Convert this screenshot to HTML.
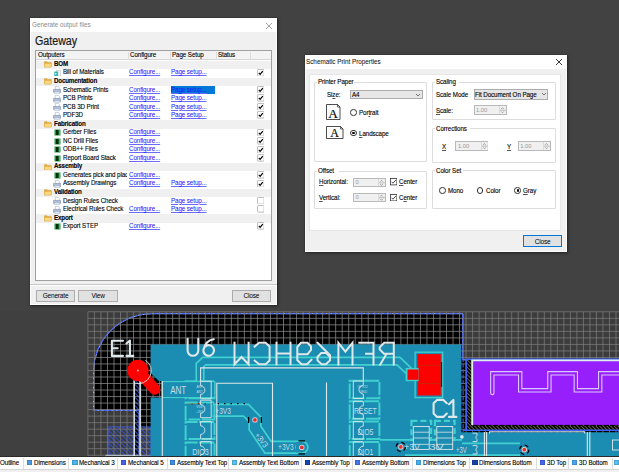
<!DOCTYPE html>
<html><head><meta charset="utf-8">
<style>
*{margin:0;padding:0;box-sizing:border-box}
html,body{width:619px;height:472px;overflow:hidden;background:#424242;font-family:"Liberation Sans",sans-serif;color:#000}
.a{position:absolute}
.t{position:absolute;white-space:nowrap;font-size:7px;line-height:8.5px;letter-spacing:-0.1px;transform:scaleX(0.89);transform-origin:0 0;-webkit-text-stroke:0.12px currentColor}
#d1{left:30px;top:18px;width:247px;height:287px;background:#f0f0f0;box-shadow:inset 0 0 0 0.9px #fcfcfc,0 0 1px rgba(0,0,0,.6),1px 1px 3px rgba(0,0,0,.45)}
#d2{left:304.5px;top:55.3px;width:262.5px;height:196.5px;background:#f0f0f0;box-shadow:inset 0 0 0 0.9px #fcfcfc,0 0 1px rgba(0,0,0,.6),1px 1px 3px rgba(0,0,0,.45)}
.lnk{-webkit-text-stroke:0.05px #1a1aff;color:#1a1aff;text-decoration:underline;text-decoration-thickness:0.4px;text-underline-offset:0.8px;text-decoration-color:#6a6aff}
.row{position:absolute;left:0;width:235.4px;height:8.5px}
.g{background:#f0f0f0}
.b{font-weight:bold}
.cb{position:absolute;left:220.5px;width:7px;height:7px;border:0.8px solid #9a9a9a;background:#fff;border-radius:1px}
.cb.on::after{content:"";position:absolute;left:1.6px;top:0.3px;width:2px;height:3.8px;border:solid #000;border-width:0 1.2px 1.2px 0;transform:rotate(40deg)}
.btn{position:absolute;background:#e1e1e1;border:0.8px solid #adadad;font-size:6.5px;letter-spacing:-0.18px;text-align:center}
.grp{position:absolute;border:0.8px solid #dcdcdc;border-radius:1px}

.spin{position:absolute;background:#f0f0f0;border:0.8px solid #b9b9b9;font-size:5.8px;color:#9a9a9a;line-height:8px;padding-left:1.5px}
.rad{position:absolute;width:6.6px;height:6.6px;border:0.8px solid #333;border-radius:50%;background:#fff}
.rad.on::after{content:"";position:absolute;left:1.2px;top:1.2px;width:2.6px;height:2.6px;border-radius:50%;background:#000}
.ck2{position:absolute;width:6.5px;height:6.5px;border:0.8px solid #333;background:#fff}
.ck2::after{content:"";position:absolute;left:1.7px;top:0.2px;width:1.8px;height:3.6px;border:solid #000;border-width:0 0.9px 0.9px 0;transform:rotate(40deg)}
u{text-decoration-thickness:0.4px;text-underline-offset:0.6px;text-decoration-color:#555}
</style></head><body>

<!-- ============ DIALOG 1 ============ -->
<div id="d1" class="a">
  <div class="a" style="left:0;top:0;width:247px;height:14px;background:#fff"></div>
  <div class="t" style="left:1.8px;top:2.6px;color:#8a8a8a;font-size:7.1px;letter-spacing:0;-webkit-text-stroke:0">Generate output files</div>
  <svg class="a" style="left:235px;top:3.5px" width="8" height="8" viewBox="0 0 8 8"><path d="M1 1L7 7M7 1L1 7" stroke="#8a8a8a" stroke-width="0.8"/></svg>
  <div class="t" style="left:5.2px;top:15.6px;font-size:12px;line-height:14px;color:#1a1a1a;letter-spacing:0;-webkit-text-stroke:0.2px #1a1a1a">Gateway</div>

  <!-- table -->
  <div class="a" style="left:5px;top:32px;width:237px;height:231px;background:#fff;border:0.8px solid #a0a0a0">
    <div class="a" style="left:0;top:0;width:235.4px;height:9px;background:#f3f3f3;border-bottom:0.8px solid #d5d5d5">
      <div class="a" style="left:91.5px;top:0.5px;width:0.8px;height:8px;background:#dcdcdc"></div>
      <div class="a" style="left:133.5px;top:0.5px;width:0.8px;height:8px;background:#dcdcdc"></div>
      <div class="a" style="left:180px;top:0.5px;width:0.8px;height:8px;background:#dcdcdc"></div>
      <div class="a" style="left:214px;top:0.5px;width:0.8px;height:8px;background:#dcdcdc"></div>
      <div class="t" style="left:2px;top:0.3px">Outputers</div>
      <div class="t" style="left:93.5px;top:0.3px">Configure</div>
      <div class="t" style="left:135.5px;top:0.3px">Page Setup</div>
      <div class="t" style="left:182px;top:0.3px">Status</div>
    </div>
    <div id="rows" class="a" style="left:0;top:9.5px;width:236px;height:220px"><div class="row g" style="top:0.00px"><svg class="a" style="left:8.4px;top:0.7px" width="8" height="6.6" viewBox="0 0 16 13"><path d="M0.8 1.2H6L7.5 2.7H14.5V11.8H0.8Z" fill="#e3aa3c" stroke="#c8901e" stroke-width="0.8"/><path d="M1.2 5H15.5L14 12H0.8Z" fill="#fcd982" stroke="#d8a030" stroke-width="0.7"/></svg><div class="t b" style="left:17.9px;top:-0.6px;font-size:7px;letter-spacing:-0.2px">BOM</div></div><div class="row" style="top:8.54px"><svg class="a" style="left:18.1px;top:0.9px" width="6.8" height="6.5" viewBox="0 0 14 13"><rect x="5" y="0.5" width="8.5" height="12" fill="#f2f4f6" stroke="#a8b4c0" stroke-width="0.9"/><rect x="0.5" y="3" width="8" height="9.5" fill="#35b6b0"/><rect x="2" y="6" width="3" height="3" fill="#d8fbf8"/></svg><div class="t" style="left:27.3px;top:-0.6px;width:72px;overflow:hidden">Bill of Materials</div><div class="t lnk" style="left:92.9px;top:-0.6px">Configure...</div><div class="t lnk" style="left:134.8px;top:-0.6px">Page setup...</div><svg class="a" style="left:220.8px;top:-0.3px" width="7.6" height="7.6" viewBox="0 0 8 8"><rect x="0.5" y="0.5" width="7" height="7" rx="0.8" fill="#fff" stroke="#a8a8a8" stroke-width="0.8"/><path d="M1.9 4.1L3.3 5.6L6.1 2.2" fill="none" stroke="#000" stroke-width="1.25"/></svg></div><div class="row g" style="top:17.08px"><svg class="a" style="left:8.4px;top:0.7px" width="8" height="6.6" viewBox="0 0 16 13"><path d="M0.8 1.2H6L7.5 2.7H14.5V11.8H0.8Z" fill="#e3aa3c" stroke="#c8901e" stroke-width="0.8"/><path d="M1.2 5H15.5L14 12H0.8Z" fill="#fcd982" stroke="#d8a030" stroke-width="0.7"/></svg><div class="t b" style="left:17.9px;top:-0.6px;font-size:7px;letter-spacing:-0.2px">Documentation</div></div><div class="row" style="top:25.62px"><svg class="a" style="left:17.3px;top:0.2px" width="8.2" height="7.8" viewBox="0 0 16 15"><path d="M4.5 0.6H10.5L12.3 2.4V7.5H4.5Z" fill="#fff" stroke="#8696ac" stroke-width="0.9"/><path d="M0.8 6.5H15.2V12.2H0.8Z" fill="#b3c0d6" stroke="#6a7fa4" stroke-width="0.9"/><path d="M2.6 10.5H13.4V14.2H2.6Z" fill="#e6ecf4" stroke="#8394b4" stroke-width="0.8"/></svg><div class="t" style="left:27.3px;top:-0.6px;width:72px;overflow:hidden">Schematic Prints</div><div class="t lnk" style="left:92.9px;top:-0.6px">Configure...</div><div class="a" style="left:134.6px;top:-0.4px;width:44.8px;height:8.2px;background:#0078d7"></div><div class="t lnk" style="left:134.8px;top:-0.6px">Page setup...</div><svg class="a" style="left:220.8px;top:-0.3px" width="7.6" height="7.6" viewBox="0 0 8 8"><rect x="0.5" y="0.5" width="7" height="7" rx="0.8" fill="#fff" stroke="#a8a8a8" stroke-width="0.8"/><path d="M1.9 4.1L3.3 5.6L6.1 2.2" fill="none" stroke="#000" stroke-width="1.25"/></svg></div><div class="row" style="top:34.16px"><svg class="a" style="left:17.3px;top:0.2px" width="8.2" height="7.8" viewBox="0 0 16 15"><path d="M4.5 0.6H10.5L12.3 2.4V7.5H4.5Z" fill="#fff" stroke="#8696ac" stroke-width="0.9"/><path d="M0.8 6.5H15.2V12.2H0.8Z" fill="#b3c0d6" stroke="#6a7fa4" stroke-width="0.9"/><path d="M2.6 10.5H13.4V14.2H2.6Z" fill="#e6ecf4" stroke="#8394b4" stroke-width="0.8"/></svg><div class="t" style="left:27.3px;top:-0.6px;width:72px;overflow:hidden">PCB Prints</div><div class="t lnk" style="left:92.9px;top:-0.6px">Configure...</div><div class="t lnk" style="left:134.8px;top:-0.6px">Page setup...</div><svg class="a" style="left:220.8px;top:-0.3px" width="7.6" height="7.6" viewBox="0 0 8 8"><rect x="0.5" y="0.5" width="7" height="7" rx="0.8" fill="#fff" stroke="#a8a8a8" stroke-width="0.8"/><path d="M1.9 4.1L3.3 5.6L6.1 2.2" fill="none" stroke="#000" stroke-width="1.25"/></svg></div><div class="row" style="top:42.70px"><svg class="a" style="left:17.3px;top:0.2px" width="8.2" height="7.8" viewBox="0 0 16 15"><path d="M4.5 0.6H10.5L12.3 2.4V7.5H4.5Z" fill="#fff" stroke="#8696ac" stroke-width="0.9"/><path d="M0.8 6.5H15.2V12.2H0.8Z" fill="#b3c0d6" stroke="#6a7fa4" stroke-width="0.9"/><path d="M2.6 10.5H13.4V14.2H2.6Z" fill="#e6ecf4" stroke="#8394b4" stroke-width="0.8"/></svg><div class="t" style="left:27.3px;top:-0.6px;width:72px;overflow:hidden">PCB 3D Print</div><div class="t lnk" style="left:92.9px;top:-0.6px">Configure...</div><div class="t lnk" style="left:134.8px;top:-0.6px">Page setup...</div><svg class="a" style="left:220.8px;top:-0.3px" width="7.6" height="7.6" viewBox="0 0 8 8"><rect x="0.5" y="0.5" width="7" height="7" rx="0.8" fill="#fff" stroke="#a8a8a8" stroke-width="0.8"/><path d="M1.9 4.1L3.3 5.6L6.1 2.2" fill="none" stroke="#000" stroke-width="1.25"/></svg></div><div class="row" style="top:51.24px"><svg class="a" style="left:17.3px;top:0.2px" width="8.2" height="7.8" viewBox="0 0 16 15"><path d="M4.5 0.6H10.5L12.3 2.4V7.5H4.5Z" fill="#fff" stroke="#8696ac" stroke-width="0.9"/><path d="M0.8 6.5H15.2V12.2H0.8Z" fill="#b3c0d6" stroke="#6a7fa4" stroke-width="0.9"/><path d="M2.6 10.5H13.4V14.2H2.6Z" fill="#e6ecf4" stroke="#8394b4" stroke-width="0.8"/></svg><div class="t" style="left:27.3px;top:-0.6px;width:72px;overflow:hidden">PDF3D</div><div class="t lnk" style="left:92.9px;top:-0.6px">Configure...</div><div class="t lnk" style="left:134.8px;top:-0.6px">Page setup...</div><svg class="a" style="left:220.8px;top:-0.3px" width="7.6" height="7.6" viewBox="0 0 8 8"><rect x="0.5" y="0.5" width="7" height="7" rx="0.8" fill="#fff" stroke="#a8a8a8" stroke-width="0.8"/><path d="M1.9 4.1L3.3 5.6L6.1 2.2" fill="none" stroke="#000" stroke-width="1.25"/></svg></div><div class="row g" style="top:59.78px"><svg class="a" style="left:8.4px;top:0.7px" width="8" height="6.6" viewBox="0 0 16 13"><path d="M0.8 1.2H6L7.5 2.7H14.5V11.8H0.8Z" fill="#e3aa3c" stroke="#c8901e" stroke-width="0.8"/><path d="M1.2 5H15.5L14 12H0.8Z" fill="#fcd982" stroke="#d8a030" stroke-width="0.7"/></svg><div class="t b" style="left:17.9px;top:-0.6px;font-size:7px;letter-spacing:-0.2px">Fabrication</div></div><div class="row" style="top:68.32px"><svg class="a" style="left:18.2px;top:0.6px" width="7" height="7" viewBox="0 0 14 14"><rect x="1" y="1" width="12" height="12" fill="#1a9a3a"/><rect x="4" y="2" width="5" height="10" fill="#0b2a12"/><rect x="10" y="2" width="2" height="10" fill="#3cc060"/></svg><div class="t" style="left:27.3px;top:-0.6px;width:72px;overflow:hidden">Gerber Files</div><div class="t lnk" style="left:92.9px;top:-0.6px">Configure...</div><svg class="a" style="left:220.8px;top:-0.3px" width="7.6" height="7.6" viewBox="0 0 8 8"><rect x="0.5" y="0.5" width="7" height="7" rx="0.8" fill="#fff" stroke="#a8a8a8" stroke-width="0.8"/><path d="M1.9 4.1L3.3 5.6L6.1 2.2" fill="none" stroke="#000" stroke-width="1.25"/></svg></div><div class="row" style="top:76.86px"><svg class="a" style="left:18.2px;top:0.6px" width="7" height="7" viewBox="0 0 14 14"><rect x="1" y="1" width="12" height="12" fill="#1a9a3a"/><rect x="4" y="2" width="5" height="10" fill="#0b2a12"/><rect x="10" y="2" width="2" height="10" fill="#3cc060"/></svg><div class="t" style="left:27.3px;top:-0.6px;width:72px;overflow:hidden">NC Drill Files</div><div class="t lnk" style="left:92.9px;top:-0.6px">Configure...</div><svg class="a" style="left:220.8px;top:-0.3px" width="7.6" height="7.6" viewBox="0 0 8 8"><rect x="0.5" y="0.5" width="7" height="7" rx="0.8" fill="#fff" stroke="#a8a8a8" stroke-width="0.8"/><path d="M1.9 4.1L3.3 5.6L6.1 2.2" fill="none" stroke="#000" stroke-width="1.25"/></svg></div><div class="row" style="top:85.40px"><svg class="a" style="left:18.2px;top:0.6px" width="7" height="7" viewBox="0 0 14 14"><rect x="1" y="1" width="12" height="12" fill="#1a9a3a"/><rect x="4" y="2" width="5" height="10" fill="#0b2a12"/><rect x="10" y="2" width="2" height="10" fill="#3cc060"/></svg><div class="t" style="left:27.3px;top:-0.6px;width:72px;overflow:hidden">ODB++ Files</div><div class="t lnk" style="left:92.9px;top:-0.6px">Configure...</div><svg class="a" style="left:220.8px;top:-0.3px" width="7.6" height="7.6" viewBox="0 0 8 8"><rect x="0.5" y="0.5" width="7" height="7" rx="0.8" fill="#fff" stroke="#a8a8a8" stroke-width="0.8"/><path d="M1.9 4.1L3.3 5.6L6.1 2.2" fill="none" stroke="#000" stroke-width="1.25"/></svg></div><div class="row" style="top:93.94px"><svg class="a" style="left:18.2px;top:0.6px" width="7" height="7" viewBox="0 0 14 14"><rect x="1" y="1" width="12" height="12" fill="#1a9a3a"/><rect x="4" y="2" width="5" height="10" fill="#0b2a12"/><rect x="10" y="2" width="2" height="10" fill="#3cc060"/></svg><div class="t" style="left:27.3px;top:-0.6px;width:72px;overflow:hidden">Report Board Stack</div><div class="t lnk" style="left:92.9px;top:-0.6px">Configure...</div><svg class="a" style="left:220.8px;top:-0.3px" width="7.6" height="7.6" viewBox="0 0 8 8"><rect x="0.5" y="0.5" width="7" height="7" rx="0.8" fill="#fff" stroke="#a8a8a8" stroke-width="0.8"/><path d="M1.9 4.1L3.3 5.6L6.1 2.2" fill="none" stroke="#000" stroke-width="1.25"/></svg></div><div class="row g" style="top:102.48px"><svg class="a" style="left:8.4px;top:0.7px" width="8" height="6.6" viewBox="0 0 16 13"><path d="M0.8 1.2H6L7.5 2.7H14.5V11.8H0.8Z" fill="#e3aa3c" stroke="#c8901e" stroke-width="0.8"/><path d="M1.2 5H15.5L14 12H0.8Z" fill="#fcd982" stroke="#d8a030" stroke-width="0.7"/></svg><div class="t b" style="left:17.9px;top:-0.6px;font-size:7px;letter-spacing:-0.2px">Assembly</div></div><div class="row" style="top:111.02px"><svg class="a" style="left:18.2px;top:0.6px" width="7" height="7" viewBox="0 0 14 14"><rect x="1" y="1" width="12" height="12" fill="#1a9a3a"/><rect x="4" y="2" width="5" height="10" fill="#0b2a12"/><rect x="10" y="2" width="2" height="10" fill="#3cc060"/></svg><div class="t" style="left:27.3px;top:-0.6px;width:72px;overflow:hidden">Generates pick and place files</div><div class="t lnk" style="left:92.9px;top:-0.6px">Configure...</div><svg class="a" style="left:220.8px;top:-0.3px" width="7.6" height="7.6" viewBox="0 0 8 8"><rect x="0.5" y="0.5" width="7" height="7" rx="0.8" fill="#fff" stroke="#a8a8a8" stroke-width="0.8"/><path d="M1.9 4.1L3.3 5.6L6.1 2.2" fill="none" stroke="#000" stroke-width="1.25"/></svg></div><div class="row" style="top:119.56px"><svg class="a" style="left:17.3px;top:0.2px" width="8.2" height="7.8" viewBox="0 0 16 15"><path d="M4.5 0.6H10.5L12.3 2.4V7.5H4.5Z" fill="#fff" stroke="#8696ac" stroke-width="0.9"/><path d="M0.8 6.5H15.2V12.2H0.8Z" fill="#b3c0d6" stroke="#6a7fa4" stroke-width="0.9"/><path d="M2.6 10.5H13.4V14.2H2.6Z" fill="#e6ecf4" stroke="#8394b4" stroke-width="0.8"/></svg><div class="t" style="left:27.3px;top:-0.6px;width:72px;overflow:hidden">Assembly Drawings</div><div class="t lnk" style="left:92.9px;top:-0.6px">Configure...</div><div class="t lnk" style="left:134.8px;top:-0.6px">Page setup...</div><svg class="a" style="left:220.8px;top:-0.3px" width="7.6" height="7.6" viewBox="0 0 8 8"><rect x="0.5" y="0.5" width="7" height="7" rx="0.8" fill="#fff" stroke="#a8a8a8" stroke-width="0.8"/><path d="M1.9 4.1L3.3 5.6L6.1 2.2" fill="none" stroke="#000" stroke-width="1.25"/></svg></div><div class="row g" style="top:128.10px"><svg class="a" style="left:8.4px;top:0.7px" width="8" height="6.6" viewBox="0 0 16 13"><path d="M0.8 1.2H6L7.5 2.7H14.5V11.8H0.8Z" fill="#e3aa3c" stroke="#c8901e" stroke-width="0.8"/><path d="M1.2 5H15.5L14 12H0.8Z" fill="#fcd982" stroke="#d8a030" stroke-width="0.7"/></svg><div class="t b" style="left:17.9px;top:-0.6px;font-size:7px;letter-spacing:-0.2px">Validation</div></div><div class="row" style="top:136.64px"><svg class="a" style="left:17.3px;top:0.2px" width="8.2" height="7.8" viewBox="0 0 16 15"><path d="M4.5 0.6H10.5L12.3 2.4V7.5H4.5Z" fill="#fff" stroke="#8696ac" stroke-width="0.9"/><path d="M0.8 6.5H15.2V12.2H0.8Z" fill="#b3c0d6" stroke="#6a7fa4" stroke-width="0.9"/><path d="M2.6 10.5H13.4V14.2H2.6Z" fill="#e6ecf4" stroke="#8394b4" stroke-width="0.8"/></svg><div class="t" style="left:27.3px;top:-0.6px;width:72px;overflow:hidden">Design Rules Check</div><div class="t lnk" style="left:134.8px;top:-0.6px">Page setup...</div><svg class="a" style="left:220.8px;top:-0.3px" width="7.6" height="7.6" viewBox="0 0 8 8"><rect x="0.5" y="0.5" width="7" height="7" rx="0.8" fill="#fff" stroke="#a8a8a8" stroke-width="0.8"/></svg></div><div class="row" style="top:145.18px"><svg class="a" style="left:17.3px;top:0.2px" width="8.2" height="7.8" viewBox="0 0 16 15"><path d="M4.5 0.6H10.5L12.3 2.4V7.5H4.5Z" fill="#fff" stroke="#8696ac" stroke-width="0.9"/><path d="M0.8 6.5H15.2V12.2H0.8Z" fill="#b3c0d6" stroke="#6a7fa4" stroke-width="0.9"/><path d="M2.6 10.5H13.4V14.2H2.6Z" fill="#e6ecf4" stroke="#8394b4" stroke-width="0.8"/></svg><div class="t" style="left:27.3px;top:-0.6px;width:72px;overflow:hidden">Electrical Rules Check</div><div class="t lnk" style="left:92.9px;top:-0.6px">Configure...</div><div class="t lnk" style="left:134.8px;top:-0.6px">Page setup...</div><svg class="a" style="left:220.8px;top:-0.3px" width="7.6" height="7.6" viewBox="0 0 8 8"><rect x="0.5" y="0.5" width="7" height="7" rx="0.8" fill="#fff" stroke="#a8a8a8" stroke-width="0.8"/></svg></div><div class="row g" style="top:153.72px"><svg class="a" style="left:8.4px;top:0.7px" width="8" height="6.6" viewBox="0 0 16 13"><path d="M0.8 1.2H6L7.5 2.7H14.5V11.8H0.8Z" fill="#e3aa3c" stroke="#c8901e" stroke-width="0.8"/><path d="M1.2 5H15.5L14 12H0.8Z" fill="#fcd982" stroke="#d8a030" stroke-width="0.7"/></svg><div class="t b" style="left:17.9px;top:-0.6px;font-size:7px;letter-spacing:-0.2px">Export</div></div><div class="row" style="top:162.26px"><svg class="a" style="left:18.2px;top:0.6px" width="7" height="7" viewBox="0 0 14 14"><rect x="1" y="1" width="12" height="12" fill="#1a9a3a"/><rect x="4" y="2" width="5" height="10" fill="#0b2a12"/><rect x="10" y="2" width="2" height="10" fill="#3cc060"/></svg><div class="t" style="left:27.3px;top:-0.6px;width:72px;overflow:hidden">Export STEP</div><div class="t lnk" style="left:92.9px;top:-0.6px">Configure...</div><svg class="a" style="left:220.8px;top:-0.3px" width="7.6" height="7.6" viewBox="0 0 8 8"><rect x="0.5" y="0.5" width="7" height="7" rx="0.8" fill="#fff" stroke="#a8a8a8" stroke-width="0.8"/><path d="M1.9 4.1L3.3 5.6L6.1 2.2" fill="none" stroke="#000" stroke-width="1.25"/></svg></div></div>
  </div>

  <div class="a" style="left:0;top:266px;width:247px;height:0.8px;background:#c8c8c8"></div>
  <div class="a" style="left:0;top:266.8px;width:247px;height:0.8px;background:#fff"></div>
  <div class="btn" style="left:6px;top:271.5px;width:39px;height:12px;line-height:10.5px">Generate</div>
  <div class="btn" style="left:48.3px;top:271.5px;width:39.5px;height:12px;line-height:10.5px">View</div>
  <div class="btn" style="left:202.2px;top:271.5px;width:38.5px;height:12px;line-height:10.5px">Close</div>
</div>

<!-- ============ DIALOG 2 ============ -->
<div id="d2" class="a">
  <div class="a" style="left:0;top:0;width:262.5px;height:13.5px;background:#fff"></div>
  <div class="t" style="left:1.8px;top:2.6px;font-size:7.1px;letter-spacing:0;color:#111;-webkit-text-stroke:0.05px #111">Schematic Print Properties</div>
  <svg class="a" style="left:250.5px;top:3px" width="8" height="8" viewBox="0 0 8 8"><path d="M1 1L7 7M7 1L1 7" stroke="#222" stroke-width="0.9"/></svg>
  <div class="a" style="left:4.8px;top:18.3px;width:252.2px;height:157.6px;background:#fff;border:0.8px solid #e6e6e6"></div>
  <div class="btn" style="left:218.6px;top:180px;width:39px;height:11.7px;line-height:11px;border:1px solid #0078d7">Close</div>
</div>

<div class="a" style="left:0;top:0;width:619px;height:472px;pointer-events:none"><div class="grp" style="left:314px;top:81.5px;width:113.00px;height:80.60px"></div><div class="a" style="left:317.20px;top:79.50px;width:37px;height:4px;background:#fff"></div><div class="t" style="left:318.2px;top:78.20px;font-size:7px;line-height:8px;">Printer Paper</div><div class="grp" style="left:314px;top:170.5px;width:113.00px;height:38.90px"></div><div class="a" style="left:317.20px;top:168.50px;width:22px;height:4px;background:#fff"></div><div class="t" style="left:318.2px;top:167.20px;font-size:7px;line-height:8px;">Offset</div><div class="grp" style="left:431.6px;top:81.5px;width:124.60px;height:38.80px"></div><div class="a" style="left:434.80px;top:79.50px;width:24px;height:4px;background:#fff"></div><div class="t" style="left:435.8px;top:78.20px;font-size:7px;line-height:8px;">Scaling</div><div class="grp" style="left:431.6px;top:128.3px;width:124.60px;height:34.60px"></div><div class="a" style="left:434.80px;top:126.30px;width:35px;height:4px;background:#fff"></div><div class="t" style="left:435.8px;top:125.00px;font-size:7px;line-height:8px;">Corrections</div><div class="grp" style="left:431.6px;top:170.2px;width:124.60px;height:39.20px"></div><div class="a" style="left:434.80px;top:168.20px;width:28px;height:4px;background:#fff"></div><div class="t" style="left:435.8px;top:166.90px;font-size:7px;line-height:8px;">Color Set</div><div class="t" style="left:326.8px;top:90.80px;font-size:7px;line-height:8px;">Si<u>z</u>e:</div><div class="a" style="left:350.1px;top:90.1px;width:72.70px;height:8.90px;background:#e6e6e6;border:0.8px solid #acacac"></div><div class="t" style="left:351.90000000000003px;top:91.05px;font-size:7px;line-height:8px;">A4</div><svg class="a" style="left:415.30px;top:92.55px" width="6" height="4" viewBox="0 0 6 4"><path d="M1 1L3 3L5 1" stroke="#444" stroke-width="0.7" fill="none"/></svg><svg class="a" style="left:326.1px;top:104.1px" width="14.5" height="16" viewBox="0 0 58.0 64"><path d="M2 2H46.0L56.0 12V62H2Z" fill="#fff" stroke="#111" stroke-width="3"/><path d="M46.0 2V12H56.0" fill="none" stroke="#111" stroke-width="2.5"/><text x="28.0" y="55" text-anchor="middle" font-family="Liberation Serif" font-size="53.7" fill="#000" stroke="#000" stroke-width="0.6">A</text></svg><div class="rad" style="left:350.10px;top:109.20px"></div><div class="t" style="left:358.7px;top:109.00px;font-size:7px;line-height:8px;">Por<u>t</u>rait</div><svg class="a" style="left:326.1px;top:125.8px" width="17.5" height="13" viewBox="0 0 70.0 52"><path d="M2 2H58.0L68.0 12V50H2Z" fill="#fff" stroke="#111" stroke-width="3"/><path d="M58.0 2V12H68.0" fill="none" stroke="#111" stroke-width="2.5"/><text x="34.0" y="43" text-anchor="middle" font-family="Liberation Serif" font-size="48.1" fill="#000" stroke="#000" stroke-width="0.6">A</text></svg><div class="rad on" style="left:350.10px;top:129.70px"></div><div class="t" style="left:358.7px;top:129.50px;font-size:7px;line-height:8px;"><u>L</u>andscape</div><div class="t" style="left:319.1px;top:178.40px;font-size:7px;line-height:8px;"><u>H</u>orizontal:</div><div class="spin" style="left:353.1px;top:178px;width:32.70px;height:9.30px;line-height:7.70px">0</div><svg class="a" style="left:378.20px;top:178.80px" width="6.8" height="7.70" viewBox="0 0 6.8 7.70"><rect x="0" y="0" width="6.8" height="7.70" fill="#f0f0f0"/><path d="M0.3 0V7.70" stroke="#c4c4c4" stroke-width="0.6"/><path d="M1 3.85H6.8" stroke="#9a9a9a" stroke-width="0.6"/><path d="M2.2 2.65L3.5 1.25L4.8 2.65M2.2 5.05L3.5 6.45L4.8 5.05" stroke="#777" stroke-width="0.6" fill="none"/></svg><svg class="a" style="left:389.90px;top:178.30px" width="7.4" height="7.4" viewBox="0 0 7.4 7.4"><rect x="0.5" y="0.5" width="6.4" height="6.4" fill="#fff" stroke="#333" stroke-width="0.8"/><path d="M1.6 3.8L3 5.2L5.9 2" fill="none" stroke="#222" stroke-width="0.8"/></svg><div class="t" style="left:398.6px;top:178.40px;font-size:7px;line-height:8px;"><u>C</u>enter</div><div class="t" style="left:319.1px;top:193.80px;font-size:7px;line-height:8px;"><u>V</u>ertical:</div><div class="spin" style="left:353.1px;top:192.7px;width:32.70px;height:9.00px;line-height:7.40px">0</div><svg class="a" style="left:378.20px;top:193.50px" width="6.8" height="7.40" viewBox="0 0 6.8 7.40"><rect x="0" y="0" width="6.8" height="7.40" fill="#f0f0f0"/><path d="M0.3 0V7.40" stroke="#c4c4c4" stroke-width="0.6"/><path d="M1 3.70H6.8" stroke="#9a9a9a" stroke-width="0.6"/><path d="M2.2 2.50L3.5 1.10L4.8 2.50M2.2 4.90L3.5 6.30L4.8 4.90" stroke="#777" stroke-width="0.6" fill="none"/></svg><svg class="a" style="left:389.90px;top:193.70px" width="7.4" height="7.4" viewBox="0 0 7.4 7.4"><rect x="0.5" y="0.5" width="6.4" height="6.4" fill="#fff" stroke="#333" stroke-width="0.8"/><path d="M1.6 3.8L3 5.2L5.9 2" fill="none" stroke="#222" stroke-width="0.8"/></svg><div class="t" style="left:398.6px;top:193.80px;font-size:7px;line-height:8px;">C<u>e</u>nter</div><div class="t" style="left:436px;top:90.90px;font-size:7px;line-height:8px;">Scale Mode</div><div class="a" style="left:473.5px;top:89.3px;width:74.90px;height:10.30px;background:#e6e6e6;border:0.8px solid #acacac"></div><div class="t" style="left:475.3px;top:90.95px;font-size:7px;line-height:8px;">Fit Document On Page</div><svg class="a" style="left:540.90px;top:92.45px" width="6" height="4" viewBox="0 0 6 4"><path d="M1 1L3 3L5 1" stroke="#444" stroke-width="0.7" fill="none"/></svg><div class="t" style="left:436px;top:106.70px;font-size:7px;line-height:8px;"><u>S</u>cale:</div><div class="spin" style="left:473.5px;top:105px;width:33.10px;height:10.10px;line-height:8.50px">1.00</div><svg class="a" style="left:499.00px;top:105.80px" width="6.8" height="8.50" viewBox="0 0 6.8 8.50"><rect x="0" y="0" width="6.8" height="8.50" fill="#f0f0f0"/><path d="M0.3 0V8.50" stroke="#c4c4c4" stroke-width="0.6"/><path d="M1 4.25H6.8" stroke="#9a9a9a" stroke-width="0.6"/><path d="M2.2 3.05L3.5 1.65L4.8 3.05M2.2 5.45L3.5 6.85L4.8 5.45" stroke="#777" stroke-width="0.6" fill="none"/></svg><div class="t" style="left:442px;top:142.60px;font-size:7px;line-height:8px;"><u>X</u></div><div class="spin" style="left:455.4px;top:141px;width:33.10px;height:9.80px;line-height:8.20px">1.00</div><svg class="a" style="left:480.90px;top:141.80px" width="6.8" height="8.20" viewBox="0 0 6.8 8.20"><rect x="0" y="0" width="6.8" height="8.20" fill="#f0f0f0"/><path d="M0.3 0V8.20" stroke="#c4c4c4" stroke-width="0.6"/><path d="M1 4.10H6.8" stroke="#9a9a9a" stroke-width="0.6"/><path d="M2.2 2.90L3.5 1.50L4.8 2.90M2.2 5.30L3.5 6.70L4.8 5.30" stroke="#777" stroke-width="0.6" fill="none"/></svg><div class="t" style="left:507px;top:142.60px;font-size:7px;line-height:8px;"><u>Y</u></div><div class="spin" style="left:517.7px;top:141px;width:33.30px;height:9.80px;line-height:8.20px">1.00</div><svg class="a" style="left:543.40px;top:141.80px" width="6.8" height="8.20" viewBox="0 0 6.8 8.20"><rect x="0" y="0" width="6.8" height="8.20" fill="#f0f0f0"/><path d="M0.3 0V8.20" stroke="#c4c4c4" stroke-width="0.6"/><path d="M1 4.10H6.8" stroke="#9a9a9a" stroke-width="0.6"/><path d="M2.2 2.90L3.5 1.50L4.8 2.90M2.2 5.30L3.5 6.70L4.8 5.30" stroke="#777" stroke-width="0.6" fill="none"/></svg><div class="rad" style="left:439.20px;top:187.30px"></div><div class="t" style="left:447.6px;top:187.10px;font-size:7px;line-height:8px;">Mono</div><div class="rad" style="left:476.90px;top:187.30px"></div><div class="t" style="left:485.6px;top:187.10px;font-size:7px;line-height:8px;">Color</div><div class="rad on" style="left:514.40px;top:187.30px"></div><div class="t" style="left:523.4px;top:187.10px;font-size:7px;line-height:8px;"><u>G</u>ray</div></div>
<svg class="a" style="left:0;top:0" width="619" height="472" viewBox="0 0 619 472"><defs><clipPath id="bc"><path d="M93.5 410.4V371.7A58 58 0 0 1 151.5 313.7H462.8V359.8H619V456H139.2V410.4Z"/></clipPath><clipPath id="oc"><path d="M0 300H619V460H0ZM93.5 410.4V371.7A58 58 0 0 1 151.5 313.7H462.8V359.8H619V456H139.2V410.4Z" clip-rule="evenodd"/></clipPath><pattern id="hatch" width="3" height="3" patternUnits="userSpaceOnUse" patternTransform="rotate(-45)"><rect width="3" height="3" fill="#000"/><rect width="0.9" height="3" fill="#3050d0"/></pattern><pattern id="hatch3" width="2.6" height="2.6" patternUnits="userSpaceOnUse" patternTransform="rotate(-45)"><rect width="2.6" height="2.6" fill="#050505"/><rect width="0.9" height="2.6" fill="#6c6648"/></pattern><pattern id="hatch2" width="3" height="3" patternUnits="userSpaceOnUse" patternTransform="rotate(-45)"><rect width="3" height="3" fill="#3b3b3b"/><rect width="0.9" height="3" fill="#3050d0"/></pattern></defs><rect x="0" y="311.2" width="619" height="145" fill="#404040"/><rect x="87.9" y="311.8" width="532" height="145" fill="#3c3c3c"/><path d="M93.5 410.4V371.7A58 58 0 0 1 151.5 313.7H462.8V359.8H619V456H139.2V410.4Z" fill="#000"/><rect x="108.9" y="426.9" width="42" height="29.1" fill="url(#hatch2)" stroke="#3a5cf0" stroke-width="0.8"/><rect x="134.6" y="380" width="6" height="76" fill="url(#hatch)"/><path d="M93.5 410.4V371.7A58 58 0 0 1 151.5 313.7H462.8V359.8H619V456H139.2V410.4Z" fill="none" stroke="#b8c4ff" stroke-width="0.9"/><path d="M93.5 410.4V371.7A58 58 0 0 1 151.5 313.7H462.8V359.8H619V456H139.2V410.4Z" fill="none" stroke="#3a5cff" stroke-width="1.1" stroke-dasharray="3.4 1.3"/><g clip-path="url(#bc)"><path d="M87.90 311.80V456M94.42 311.80V456M100.94 311.80V456M107.46 311.80V456M113.98 311.80V456M120.50 311.80V456M127.02 311.80V456M133.54 311.80V456M140.06 311.80V456M146.58 311.80V456M153.10 311.80V456M159.62 311.80V456M166.14 311.80V456M172.66 311.80V456M179.18 311.80V456M185.70 311.80V456M192.22 311.80V456M198.74 311.80V456M205.26 311.80V456M211.78 311.80V456M218.30 311.80V456M224.82 311.80V456M231.34 311.80V456M237.86 311.80V456M244.38 311.80V456M250.90 311.80V456M257.42 311.80V456M263.94 311.80V456M270.46 311.80V456M276.98 311.80V456M283.50 311.80V456M290.02 311.80V456M296.54 311.80V456M303.06 311.80V456M309.58 311.80V456M316.10 311.80V456M322.62 311.80V456M329.14 311.80V456M335.66 311.80V456M342.18 311.80V456M348.70 311.80V456M355.22 311.80V456M361.74 311.80V456M368.26 311.80V456M374.78 311.80V456M381.30 311.80V456M387.82 311.80V456M394.34 311.80V456M400.86 311.80V456M407.38 311.80V456M413.90 311.80V456M420.42 311.80V456M426.94 311.80V456M433.46 311.80V456M439.98 311.80V456M446.50 311.80V456M453.02 311.80V456M459.54 311.80V456M466.06 311.80V456M472.58 311.80V456M479.10 311.80V456M485.62 311.80V456M492.14 311.80V456M498.66 311.80V456M505.18 311.80V456M511.70 311.80V456M518.22 311.80V456M524.74 311.80V456M531.26 311.80V456M537.78 311.80V456M544.30 311.80V456M550.82 311.80V456M557.34 311.80V456M563.86 311.80V456M570.38 311.80V456M576.90 311.80V456M583.42 311.80V456M589.94 311.80V456M596.46 311.80V456M602.98 311.80V456M609.50 311.80V456M616.02 311.80V456M87.90 311.80H619M87.90 318.32H619M87.90 324.84H619M87.90 331.36H619M87.90 337.88H619M87.90 344.40H619M87.90 350.92H619M87.90 357.44H619M87.90 363.96H619M87.90 370.48H619M87.90 377.00H619M87.90 383.52H619M87.90 390.04H619M87.90 396.56H619M87.90 403.08H619M87.90 409.60H619M87.90 416.12H619M87.90 422.64H619M87.90 429.16H619M87.90 435.68H619M87.90 442.20H619M87.90 448.72H619M87.90 455.24H619" stroke="#8c8c8c" stroke-width="0.75" fill="none"/></g><g clip-path="url(#oc)"><path d="M87.90 311.80V456M94.42 311.80V456M100.94 311.80V456M107.46 311.80V456M113.98 311.80V456M120.50 311.80V456M127.02 311.80V456M133.54 311.80V456M140.06 311.80V456M146.58 311.80V456M153.10 311.80V456M159.62 311.80V456M166.14 311.80V456M172.66 311.80V456M179.18 311.80V456M185.70 311.80V456M192.22 311.80V456M198.74 311.80V456M205.26 311.80V456M211.78 311.80V456M218.30 311.80V456M224.82 311.80V456M231.34 311.80V456M237.86 311.80V456M244.38 311.80V456M250.90 311.80V456M257.42 311.80V456M263.94 311.80V456M270.46 311.80V456M276.98 311.80V456M283.50 311.80V456M290.02 311.80V456M296.54 311.80V456M303.06 311.80V456M309.58 311.80V456M316.10 311.80V456M322.62 311.80V456M329.14 311.80V456M335.66 311.80V456M342.18 311.80V456M348.70 311.80V456M355.22 311.80V456M361.74 311.80V456M368.26 311.80V456M374.78 311.80V456M381.30 311.80V456M387.82 311.80V456M394.34 311.80V456M400.86 311.80V456M407.38 311.80V456M413.90 311.80V456M420.42 311.80V456M426.94 311.80V456M433.46 311.80V456M439.98 311.80V456M446.50 311.80V456M453.02 311.80V456M459.54 311.80V456M466.06 311.80V456M472.58 311.80V456M479.10 311.80V456M485.62 311.80V456M492.14 311.80V456M498.66 311.80V456M505.18 311.80V456M511.70 311.80V456M518.22 311.80V456M524.74 311.80V456M531.26 311.80V456M537.78 311.80V456M544.30 311.80V456M550.82 311.80V456M557.34 311.80V456M563.86 311.80V456M570.38 311.80V456M576.90 311.80V456M583.42 311.80V456M589.94 311.80V456M596.46 311.80V456M602.98 311.80V456M609.50 311.80V456M616.02 311.80V456M87.90 311.80H619M87.90 318.32H619M87.90 324.84H619M87.90 331.36H619M87.90 337.88H619M87.90 344.40H619M87.90 350.92H619M87.90 357.44H619M87.90 363.96H619M87.90 370.48H619M87.90 377.00H619M87.90 383.52H619M87.90 390.04H619M87.90 396.56H619M87.90 403.08H619M87.90 409.60H619M87.90 416.12H619M87.90 422.64H619M87.90 429.16H619M87.90 435.68H619M87.90 442.20H619M87.90 448.72H619M87.90 455.24H619" stroke="#7c7c7c" stroke-width="0.75" fill="none"/></g><path d="M134.4 381V456M140.6 381V456M105.5 455.3H138.5" stroke="#dfe8ea" stroke-width="0.8"/><path d="M150.6 344.4H461.3V432.2H619V456H150.6V397.6H162V381H158.8L150.6 372.8Z" fill="#1b8cb2"/><path d="M463.1 358V432" stroke="#4566ff" stroke-width="1" stroke-dasharray="4 1.5"/><rect x="466.8" y="360" width="5" height="66" fill="url(#hatch3)"/><rect x="466.8" y="425.8" width="152.2" height="4.2" fill="url(#hatch3)"/><path d="M466.2 431V359.2H619M463 430.2H619" stroke="#3d62ff" stroke-width="1.5" fill="none"/><rect x="472.2" y="360.4" width="148" height="64.5" fill="#961ffc"/><path d="M472.2 424.9V360.4H619" fill="none" stroke="#dcefe8" stroke-width="1.9"/><path d="M492.3 393V373.3H520.2V390.3H549.4V373.3H575.8V390.3H600.2V373.3H625" fill="none" stroke="#dcc8ff" stroke-width="4.4" stroke-linejoin="miter" stroke-linecap="round"/><path d="M492.3 393V373.3H520.2V390.3H549.4V373.3H575.8V390.3H600.2V373.3H625" fill="none" stroke="#961ffc" stroke-width="2.2" stroke-linejoin="miter" stroke-linecap="round"/><path d="M200 382V365L204.2 361.1H398.5L410 372" fill="none" stroke="#3fd0cf" stroke-width="9.2" stroke-linejoin="miter" stroke-linecap="butt"/><path d="M200 382V365L204.2 361.1H398.5L410 372" fill="none" stroke="#1b8cb2" stroke-width="5.80" stroke-linejoin="miter" stroke-linecap="butt"/><path d="M212.5 410.2H246L255 419.5V428L268 447.2H302" fill="none" stroke="#3fd0cf" stroke-width="13.4" stroke-linejoin="miter" stroke-linecap="butt"/><path d="M212.5 410.2H246L255 419.5V428L268 447.2H302" fill="none" stroke="#1b8cb2" stroke-width="10.00" stroke-linejoin="miter" stroke-linecap="butt"/><circle cx="302" cy="447.2" r="6.7" fill="#3fd0cf"/><circle cx="302" cy="447.2" r="5" fill="#1b8cb2"/><rect x="296" y="442" width="6" height="10.4" fill="#1b8cb2"/><path d="M185 403.6H246.5" stroke="#000" stroke-width="1.4" stroke-dasharray="1.5 5" fill="none"/><path d="M186 403.6H200" stroke="#c06010" stroke-width="0.7" fill="none"/><path d="M248.6 417V423M261.3 417V423M298.5 440.8H305M298.5 453.8H305" stroke="#000" stroke-width="1.3"/><circle cx="400.8" cy="446.9" r="4.6" fill="none" stroke="#000" stroke-width="1.3" stroke-dasharray="4 3.2"/><circle cx="524.3" cy="449.7" r="4.6" fill="none" stroke="#000" stroke-width="1.3" stroke-dasharray="4 3.2"/><circle cx="254.9" cy="419.9" r="2.6" fill="#f0e0e0"/><circle cx="254.9" cy="419.9" r="1.9" fill="#e03030"/><circle cx="301.8" cy="447.4" r="2.6" fill="#f0e0e0"/><circle cx="301.8" cy="447.4" r="1.9" fill="#e03030"/><circle cx="400.8" cy="446.9" r="2.6" fill="#f0e0e0"/><circle cx="400.8" cy="446.9" r="1.9" fill="#e03030"/><circle cx="524.3" cy="449.7" r="2.6" fill="#f0e0e0"/><circle cx="524.3" cy="449.7" r="1.9" fill="#e03030"/><path d="M0 0" /><path d="M380 439.8H462M405 455.2H520M462 443.4H520" stroke="#3fd0cf" stroke-width="1.8" fill="none"/><rect x="185.6" y="381.3" width="28.9" height="17" fill="none" stroke="#3fd0cf" stroke-width="2.0" stroke-dasharray="12 1.5 15 1.5 12 1.5 15 1.5"/><rect x="185.6" y="402.4" width="28.9" height="17" fill="none" stroke="#3fd0cf" stroke-width="2.0" stroke-dasharray="12 1.5 15 1.5 12 1.5 15 1.5"/><rect x="185.6" y="422" width="28.9" height="17" fill="none" stroke="#3fd0cf" stroke-width="2.0" stroke-dasharray="12 1.5 15 1.5 12 1.5 15 1.5"/><rect x="185.6" y="442.4" width="28.9" height="17" fill="none" stroke="#3fd0cf" stroke-width="2.0" stroke-dasharray="12 1.5 15 1.5 12 1.5 15 1.5"/><rect x="349.7" y="380.7" width="29.7" height="17.5" fill="none" stroke="#3fd0cf" stroke-width="2.0" stroke-dasharray="13 1.5 15 1.5 13 1.5 15 1.5"/><rect x="349.7" y="401.3" width="29.7" height="17.5" fill="none" stroke="#3fd0cf" stroke-width="2.0" stroke-dasharray="13 1.5 15 1.5 13 1.5 15 1.5"/><rect x="349.7" y="421.6" width="29.7" height="17.5" fill="none" stroke="#3fd0cf" stroke-width="2.0" stroke-dasharray="13 1.5 15 1.5 13 1.5 15 1.5"/><rect x="349.7" y="442" width="29.7" height="17.5" fill="none" stroke="#3fd0cf" stroke-width="2.0" stroke-dasharray="13 1.5 15 1.5 13 1.5 15 1.5"/><rect x="162" y="381.6" width="52.8" height="16" fill="#1b8cb2" stroke="#3fd0cf" stroke-width="1.1"/><path d="M200.6 381.3H211.2V398.8H200.6V394.35A4.3 4.3 0 0 0 200.6 385.75Z" fill="none" stroke="#dfe8ea" stroke-width="0.9"/><path d="M200.6 400.2H211.2V417.7H200.6V413.25A4.3 4.3 0 0 0 200.6 404.65Z" fill="none" stroke="#dfe8ea" stroke-width="0.9"/><path d="M200.6 421.4H211.2V438.9H200.6V434.45A4.3 4.3 0 0 0 200.6 425.85Z" fill="none" stroke="#dfe8ea" stroke-width="0.9"/><path d="M200.6 441.6H211.2V459.1H200.6V454.65A4.3 4.3 0 0 0 200.6 446.05Z" fill="none" stroke="#dfe8ea" stroke-width="0.9"/><path d="M363.3 381.0H353.3V398.5H363.3V394.05A4.3 4.3 0 0 1 363.3 385.45Z" fill="none" stroke="#dfe8ea" stroke-width="0.9"/><path d="M363.3 401.3H353.3V418.8H363.3V414.35A4.3 4.3 0 0 1 363.3 405.75Z" fill="none" stroke="#dfe8ea" stroke-width="0.9"/><path d="M363.3 421.6H353.3V439.1H363.3V434.65A4.3 4.3 0 0 1 363.3 426.05Z" fill="none" stroke="#dfe8ea" stroke-width="0.9"/><path d="M363.3 441.8H353.3V459.3H363.3V454.85A4.3 4.3 0 0 1 363.3 446.25Z" fill="none" stroke="#dfe8ea" stroke-width="0.9"/><path d="M472.6 433.2H477V435.4A2.4 2.4 0 0 0 477 439.4V441.6H472.6" fill="none" stroke="#dfe8ea" stroke-width="0.9"/><path d="M472.6 445.6H477V447.8A2.4 2.4 0 0 0 477 451.8V454.0H472.6" fill="none" stroke="#dfe8ea" stroke-width="0.9"/><rect x="612.5" y="440" width="7" height="10" fill="none" stroke="#dfe8ea" stroke-width="0.9"/><path d="M200.6 381.3V367.9H363.3V381M162.3 381V456M216.8 456V383.2H272.5V456M326.5 382.6V456M134.2 380.5V456M140 380.5V456M489.6 433.5V431.7H584.7V433.5M484.4 432V456M486.6 432V456M587.3 432V456M589.8 432V456" fill="none" stroke="#dfe8ea" stroke-width="1.1"/><rect x="411.4" y="420.8" width="19.7" height="19" fill="none" stroke="#3fd0cf" stroke-width="2.2" stroke-dasharray="6 3"/><rect x="413.3" y="426.5" width="15.9" height="22.9" fill="#1b8cb2" stroke="#dfe8ea" stroke-width="0.9"/><path d="M413.3 432.2H429.2M413.3 438H429.2M413.3 444.3H429.2" stroke="#dfe8ea" stroke-width="0.8"/><rect x="434.9" y="420.8" width="19.7" height="19" fill="none" stroke="#3fd0cf" stroke-width="2.2" stroke-dasharray="6 3"/><rect x="436.8" y="426.5" width="15.9" height="22.9" fill="#1b8cb2" stroke="#dfe8ea" stroke-width="0.9"/><path d="M436.8 432.2H452.7M436.8 438H452.7M436.8 444.3H452.7" stroke="#dfe8ea" stroke-width="0.8"/><circle cx="461.9" cy="436.9" r="1.8" fill="#e0e8ee"/><rect x="415.1" y="352.2" width="27.6" height="45.4" fill="none" stroke="#3fd0cf" stroke-width="1.3"/><rect x="417.3" y="354.1" width="23.5" height="41.4" fill="#ff0000"/><rect x="405.6" y="367.9" width="13" height="13.3" fill="#3fd0cf"/><rect x="407.5" y="369.5" width="11" height="10.3" fill="#ff0000"/><path d="M417.3 365.3H440.8M417.3 383.6H440.8" stroke="#a04010" stroke-width="0.6"/><path d="M441.5 362V387" stroke="#222" stroke-width="1.2"/><path d="M137.9 370.5L154.8 389.2" stroke="#ff0000" stroke-width="11" stroke-linecap="round"/><circle cx="137.9" cy="370.5" r="10.7" fill="#ff0000"/><circle cx="138.6" cy="371" r="12.6" fill="none" stroke="#f0f0f0" stroke-width="0.8" stroke-dasharray="23.8 42.2 13.2 0"/><circle cx="137.9" cy="370.5" r="0.9" fill="#ffc0c0"/><g fill="none" stroke="#dfe8ea" stroke-width="2.1" stroke-linecap="round" stroke-linejoin="round"><path d="M123 340.7H111.9V355.9H123M111.9 348.3H117.7"/><path d="M126.5 343.5L129.9 340.5V355.9M126.5 355.9H133.3"/><path d="M187.6 338.8V350.4A5.35 5.35 0 0 0 198.3 350.4V338.8"/><path d="M213.8 339.2Q205 340.5 203.4 350.2A5.3 5.3 0 1 0 203.6 349"/><path d="M446.8 403.2L443.4 399.9H437L433.6 403.2V413.6L437 416.9H443.4L446.8 413.6M449 404.2L453.4 399.9V416.9M449 416.9H456.4"/></g><g fill="none" stroke="#dfe8ea" stroke-width="2.0" stroke-linecap="square" stroke-linejoin="miter"><path d="M234.5 342.8V364.3L241.5 357L248.6 364.3V342.8"/><path d="M254.7 346.5L259.1 342.8H265.6L269.6 346.5V360.6L265.6 364.3H259.1L254.7 360.6"/><path d="M276.5 342.8V364.3M290.5 342.8V364.3M276.5 353.6H290.5"/><path d="M311.4 359.8L307 364.3H301.5L297.3 360V347L301 342.8H307.5L311 346.5V350L307.5 354.2H297.3"/><path d="M317.5 342.8L330 355.2V360.4L325.8 364.3H321.6L317.5 360.4V357L321.2 353H326.2L330 356.8"/><path d="M338.4 364.6V342.8L345.4 351.6L352.5 342.8V364.6"/><path d="M359.3 342.8H373.5V364.6M366.1 353.8H373.5"/><path d="M393.8 364.6V342.8H384.2L379.7 347.3V349.4L384 353.8H393.8M386.5 353.8L380.2 364.6"/></g><text x="170.2" y="393.6" font-family="Liberation Sans" font-size="10.75" textLength="16.10" lengthAdjust="spacingAndGlyphs" fill="#c4dde6">ANT</text><text x="215.3" y="413.8" font-family="Liberation Sans" font-size="9.92" textLength="15.50" lengthAdjust="spacingAndGlyphs" fill="#c4dde6">+3V3</text><text x="192.2" y="454.6" font-family="Liberation Sans" font-size="9.78" textLength="16.60" lengthAdjust="spacingAndGlyphs" fill="#c4dde6">DIO3</text><text x="278.1" y="450.3" font-family="Liberation Sans" font-size="8.24" textLength="15.50" lengthAdjust="spacingAndGlyphs" fill="#c4dde6">+3V3</text><text x="253.5" y="443" font-family="Liberation Sans" font-size="8.38" textLength="16.00" lengthAdjust="spacingAndGlyphs" fill="#c4dde6" transform="rotate(52 261.5 440)">+3V3</text><text x="353.9" y="413.9" font-family="Liberation Sans" font-size="9.78" textLength="22.90" lengthAdjust="spacingAndGlyphs" fill="#c4dde6">RESET</text><text x="357.4" y="434.5" font-family="Liberation Sans" font-size="9.78" textLength="15.90" lengthAdjust="spacingAndGlyphs" fill="#c4dde6">DIO5</text><text x="357.4" y="454.6" font-family="Liberation Sans" font-size="9.78" textLength="15.90" lengthAdjust="spacingAndGlyphs" fill="#c4dde6">DIO1</text><text x="404" y="450" font-family="Liberation Sans" font-size="8.38" textLength="16.00" lengthAdjust="spacingAndGlyphs" fill="#c4dde6">+3V</text><text x="429" y="450" font-family="Liberation Sans" font-size="8.38" textLength="15.00" lengthAdjust="spacingAndGlyphs" fill="#c4dde6">3V</text><text x="455.9" y="453" font-family="Liberation Sans" font-size="8.38" textLength="10.80" lengthAdjust="spacingAndGlyphs" fill="#c4dde6">+3V</text><text x="196.4" y="388.2" font-family="Liberation Sans" font-size="4.19" textLength="6.20" lengthAdjust="spacingAndGlyphs" fill="#c4dde6">ANT</text><text x="196.4" y="393.4" font-family="Liberation Sans" font-size="4.19" textLength="6.20" lengthAdjust="spacingAndGlyphs" fill="#c4dde6">ANT</text><text x="196.2" y="408.3" font-family="Liberation Sans" font-size="4.19" textLength="7.00" lengthAdjust="spacingAndGlyphs" fill="#c4dde6">VDD</text><text x="196.2" y="412.8" font-family="Liberation Sans" font-size="4.19" textLength="7.00" lengthAdjust="spacingAndGlyphs" fill="#c4dde6">+3V3</text><text x="357.5" y="387.9" font-family="Liberation Sans" font-size="4.05" textLength="10.30" lengthAdjust="spacingAndGlyphs" fill="#c4dde6">GPIO2</text><text x="359.4" y="393.1" font-family="Liberation Sans" font-size="4.05" textLength="7.80" lengthAdjust="spacingAndGlyphs" fill="#c4dde6">GND</text></svg>
<div class="a" style="left:0;top:456px;width:619px;height:16px;background:#f0f0f0;border-top:0.8px solid #2a2a2a"><div class="a" style="left:0;top:0.2px;width:619px;height:11.5px;background:#fff"></div><div class="a" style="left:0;top:11.7px;width:619px;height:0.8px;background:#d6d6d6"></div><div class="t" style="left:-0.5px;top:1.5px;line-height:8px">Outline</div><div class="a" style="left:22.7px;top:0.5px;width:0.8px;height:11px;background:#dcdcdc"></div><div class="a" style="left:26.6px;top:3px;width:5.2px;height:5.2px;background:#4a9be6;border:0.4px solid rgba(0,0,0,.15)"></div><div class="t" style="left:33.6px;top:1.5px;line-height:8px">Dimensions</div><div class="a" style="left:68px;top:0.5px;width:0.8px;height:11px;background:#dcdcdc"></div><div class="a" style="left:72.4px;top:3px;width:5.2px;height:5.2px;background:#45b6f0;border:0.4px solid rgba(0,0,0,.15)"></div><div class="t" style="left:79.4px;top:1.5px;line-height:8px">Mechanical 3</div><div class="a" style="left:116.8px;top:0.5px;width:0.8px;height:11px;background:#dcdcdc"></div><div class="a" style="left:120.7px;top:3px;width:5.2px;height:5.2px;background:#4462e6;border:0.4px solid rgba(0,0,0,.15)"></div><div class="t" style="left:127.7px;top:1.5px;line-height:8px">Mechanical 5</div><div class="a" style="left:166.8px;top:0.5px;width:0.8px;height:11px;background:#dcdcdc"></div><div class="a" style="left:170.2px;top:3px;width:5.2px;height:5.2px;background:#3d8de6;border:0.4px solid rgba(0,0,0,.15)"></div><div class="t" style="left:177.2px;top:1.5px;line-height:8px">Assembly Text Top</div><div class="a" style="left:228px;top:0.5px;width:0.8px;height:11px;background:#dcdcdc"></div><div class="a" style="left:232.2px;top:3px;width:5.2px;height:5.2px;background:#54c2f2;border:0.4px solid rgba(0,0,0,.15)"></div><div class="t" style="left:239.2px;top:1.5px;line-height:8px">Assembly Text Bottom</div><div class="a" style="left:301.2px;top:0.5px;width:0.8px;height:11px;background:#dcdcdc"></div><div class="a" style="left:305.2px;top:3px;width:5.2px;height:5.2px;background:#1446b4;border:0.4px solid rgba(0,0,0,.15)"></div><div class="t" style="left:312.2px;top:1.5px;line-height:8px">Assembly Top</div><div class="a" style="left:351.7px;top:0.5px;width:0.8px;height:11px;background:#dcdcdc"></div><div class="a" style="left:354.8px;top:3px;width:5.2px;height:5.2px;background:#4a72ea;border:0.4px solid rgba(0,0,0,.15)"></div><div class="t" style="left:361.8px;top:1.5px;line-height:8px">Assembly Bottom</div><div class="a" style="left:411.6px;top:0.5px;width:0.8px;height:11px;background:#dcdcdc"></div><div class="a" style="left:415.5px;top:3px;width:5.2px;height:5.2px;background:#44b0f0;border:0.4px solid rgba(0,0,0,.15)"></div><div class="t" style="left:422.5px;top:1.5px;line-height:8px">Dimensions Top</div><div class="a" style="left:469.3px;top:0.5px;width:0.8px;height:11px;background:#dcdcdc"></div><div class="a" style="left:472.4px;top:3px;width:5.2px;height:5.2px;background:#1444a8;border:0.4px solid rgba(0,0,0,.15)"></div><div class="t" style="left:479.4px;top:1.5px;line-height:8px">Dimensions Bottom</div><div class="a" style="left:535.7px;top:0.5px;width:0.8px;height:11px;background:#dcdcdc"></div><div class="a" style="left:539.6px;top:3px;width:5.2px;height:5.2px;background:#4466f0;border:0.4px solid rgba(0,0,0,.15)"></div><div class="t" style="left:546.6px;top:1.5px;line-height:8px">3D Top</div><div class="a" style="left:568.3px;top:0.5px;width:0.8px;height:11px;background:#dcdcdc"></div><div class="a" style="left:572px;top:3px;width:5.2px;height:5.2px;background:#46a6f0;border:0.4px solid rgba(0,0,0,.15)"></div><div class="t" style="left:579px;top:1.5px;line-height:8px">3D Bottom</div><div class="a" style="left:611.5px;top:0.5px;width:0.8px;height:11px;background:#dcdcdc"></div><div class="a" style="left:614px;top:3px;width:5.2px;height:5.2px;background:#54c2f2;border:0.4px solid rgba(0,0,0,.15)"></div><div class="a" style="left:640px;top:0.5px;width:0.8px;height:11px;background:#dcdcdc"></div></div>
</body></html>
